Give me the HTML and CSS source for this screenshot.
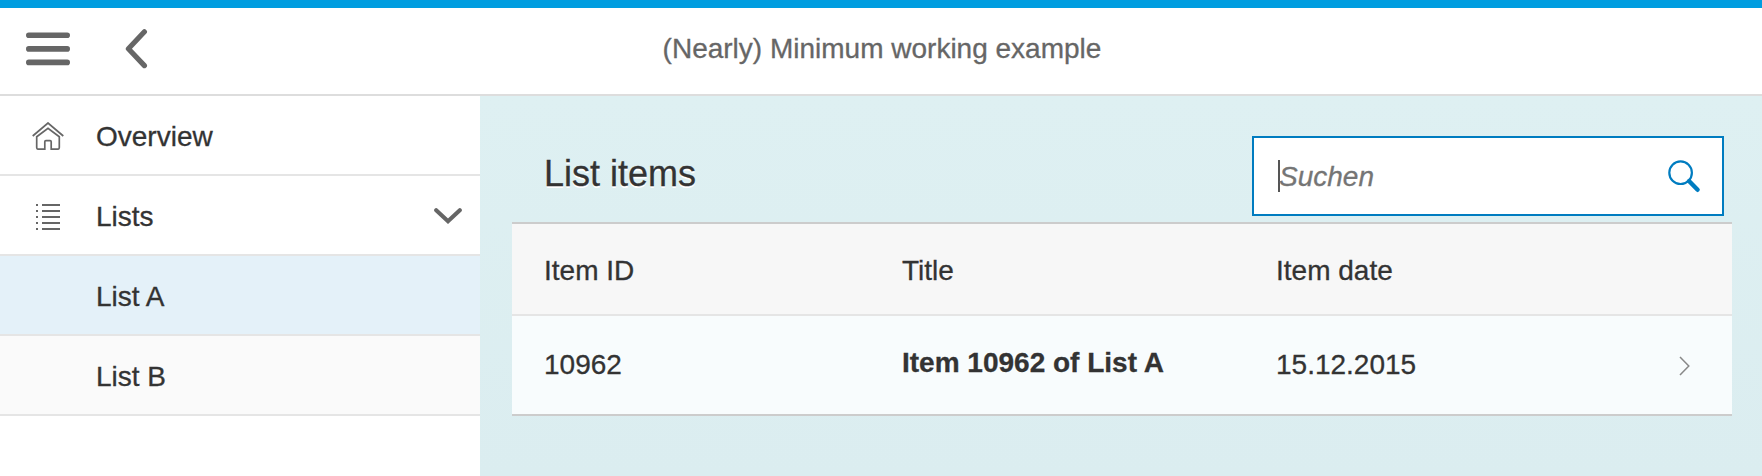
FILE: index.html
```html
<!DOCTYPE html>
<html lang="de">
<head>
<meta charset="utf-8">
<title>(Nearly) Minimum working example</title>
<link rel="stylesheet" href="styles.css">
</head>
<body>
<header class="header">
  <div class="header-actions">
    <svg class="icon-menu" width="44" height="34" viewBox="0 0 44 34"><path d="M2.8 3.2H41.2M2.8 16.9H41.2M2.8 30.4H41.2"/></svg>
    <svg class="icon-back" width="24" height="42" viewBox="0 0 24 42"><path d="M20.400 3.800L4.400 20.700L20.400 37.600"/></svg>
  </div>
  <h1 class="header-title">(Nearly) Minimum working example</h1>
</header>
<div class="body">
  <nav class="nav">
    <div class="nav-item">
      <svg class="nav-icon" width="32" height="28" viewBox="0 0 32 28"><path d="M.7 14L16 1L31.300 14M4.700 14.700V25.500Q4.700 27.200 6.400 27.200H12.800V19.800Q12.800 18.700 13.900 18.700H18.100Q19.200 18.700 19.200 19.800V27.200H25.600Q27.300 27.200 27.300 25.500V14.700L16 6.300Z"/></svg>
      <span>Overview</span>
    </div>
    <div class="nav-item">
      <svg class="nav-icon nav-icon-list" width="32" height="28" viewBox="0 0 32 28"><path d="M10 3H28M10 9H28M10 15H28M10 21H28M10 27H28M4 3H6M4 9H6M4 15H6M4 21H6M4 27H6"/></svg>
      <span>Lists</span>
      <svg class="nav-arrow" width="28" height="18" viewBox="0 0 28 18"><path d="M2.200 3.200L14 14.300L25.800 3.200"/></svg>
    </div>
    <div class="nav-item nav-child nav-selected"><span>List A</span></div>
    <div class="nav-item nav-child"><span>List B</span></div>
  </nav>
  <main class="main">
    <div class="toolbar">
      <h2 class="toolbar-title">List items</h2>
      <div class="search">
        <span class="caret"></span>
        <span class="placeholder">Suchen</span>
        <svg class="search-icon" width="34" height="34" viewBox="0 0 34 34"><circle cx="13.600" cy="13.700" r="11.300"/><path d="M22 22L30.600 30.800"/></svg>
      </div>
    </div>
    <div class="table">
      <div class="row row-head"><span>Item ID</span><span>Title</span><span>Item date</span></div>
      <div class="row row-item">
        <span>10962</span><span class="strong">Item 10962 of List A</span><span>15.12.2015</span>
        <svg class="row-arrow" width="12" height="20" viewBox="0 0 12 20"><path d="M2 1L10.800 10L2 19"/></svg>
      </div>
    </div>
  </main>
</div>
</body>
</html>
```
FILE: styles.css
```css
* { box-sizing: border-box; }
body {
  margin: 0;
  height: 476px;
  display: flex;
  flex-direction: column;
  overflow: hidden;
  background: #fff;
  color: #333;
  font: 28px/32px "Liberation Sans", Arial, sans-serif;
  -webkit-text-stroke: 0.3px;
}
svg { fill: none; stroke: #666; flex: none; }
h1, h2 { margin: 0; font-weight: normal; }

.header {
  height: 96px;
  border-top: 8px solid #009de0;
  border-bottom: 2px solid #ddd;
  display: grid;
  grid-template-columns: 1fr auto 1fr;
}
.header-actions { display: flex; align-items: flex-start; padding: 20px 0 0 26px; gap: 54px; }
.icon-menu { margin-top: 4px; stroke-width: 5.600px; stroke-linecap: round; }
.icon-back { stroke-width: 5.200px; stroke-linecap: round; stroke-linejoin: round; }
.header-title { font-size: 28px; line-height: 32px; color: #666; padding: 25px 0 0 2px; }

.body { flex: 1; display: flex; }
.nav { width: 480px; background: #fff; }
.nav-item {
  height: 80px;
  display: flex;
  align-items: center;
  padding: 2px 18px 0 32px;
  border-bottom: 2px solid #e5e5e5;
}
.nav-item span { margin-left: 32px; padding-top: 2px; }
.nav-icon { stroke-width: 1.700px; }
.nav-icon-list { stroke-width: 2px; }
.nav-arrow { margin-left: auto; stroke-width: 4.100px; stroke-linecap: round; }
.nav-child { padding-left: 64px; background: #fafafa; }
.nav-selected { background: #e4f1f9; }

.main {
  flex: 1;
  padding: 40px 30px 0 32px;
  background: linear-gradient(#def0f2, #dbedf0);
}
.toolbar {
  height: 86px;
  display: flex;
  justify-content: space-between;
  align-items: flex-start;
  padding: 0 8px 0 32px;
}
.toolbar-title { font-size: 36px; line-height: 40px; padding-top: 18px; text-shadow: 0 2px 0 #fff; }
.search {
  width: 472px;
  height: 80px;
  display: flex;
  align-items: center;
  padding: 0 21px 0 24px;
  border: 2px solid #007cc0;
  background: #fff;
}
.caret { width: 2px; height: 32px; background: #555; }
.placeholder { font-style: italic; color: #757575; padding-top: 2px; margin-left: -1px; }
.search-icon { margin-left: auto; stroke: #007cc0; stroke-width: 2.200px; }
.search-icon path { stroke-width: 4.400px; stroke-linecap: round; }

.table { border-top: 2px solid #ccc; border-bottom: 2px solid #ccc; }
.row {
  display: grid;
  grid-template-columns: 358px 374px 1fr 12px;
  align-items: center;
  padding: 0 42px 0 32px;
}
.row-head { height: 92px; padding-top: 4px; background: #f7f7f7; border-bottom: 2px solid #e5e5e5; }
.row-item { height: 98px; background: #f8fcfd; }
.strong { font-weight: bold; padding-bottom: 4px; }
.row-arrow { stroke: #888; stroke-width: 1.500px; margin-top: 1px; }
```
